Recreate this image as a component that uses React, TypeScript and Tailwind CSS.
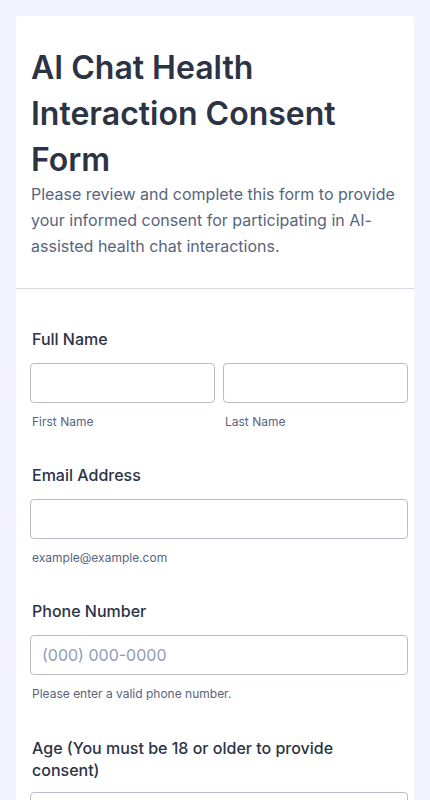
import React from "react";

const font = { fontFamily: "Inter, 'Noto Sans', sans-serif" };

function Label({ children, className = "leading-[24px]" }: { children: React.ReactNode; className?: string }) {
  return (
    <label className={`block pl-[2px] text-[16px] font-medium text-[#2c3345] ${className}`}>{children}</label>
  );
}

function Input({ placeholder }: { placeholder?: string }) {
  return (
    <input
      type="text"
      placeholder={placeholder}
      className="block w-full h-[40px] rounded-[4px] border border-[#b8bdc9] bg-white px-[11px] text-[16px] text-[#2c3345] placeholder:text-[#8f9bb3] outline-none"
      style={font}
    />
  );
}

function Sub({ children }: { children: React.ReactNode }) {
  return <div className="mt-[9px] pl-[2px] text-[12px] leading-[20px] text-[#57647e]">{children}</div>;
}

export default function App() {
  return (
    <div className="min-h-[800px] bg-[#f3f3fe] pt-4" style={font}>
      <div className="mx-4 rounded-t-[4px] bg-white">
        <div className="px-[15px] pt-[29px] pb-[29px] border-b border-[#d8dae9]">
          <h1 className="text-[32px] leading-[46px] font-semibold text-[#2c3345]">
            AI Chat Health Interaction Consent Form
          </h1>
          <p className="mt-[-2px] text-[16px] leading-[26px] text-[#57647e]">
            Please review and complete this form to provide your informed consent for participating in AI-assisted health chat interactions.
          </p>
        </div>
        <div className="pl-[14px] pr-[6px] pt-[38px] pb-10">
          <div>
            <Label>Full Name</Label>
            <div className="mt-3 grid grid-cols-2 gap-2">
              <div>
                <Input />
                <Sub>First Name</Sub>
              </div>
              <div>
                <Input />
                <Sub>Last Name</Sub>
              </div>
            </div>
          </div>
          <div className="mt-[31px]">
            <Label>Email Address</Label>
            <div className="mt-3">
              <Input />
              <Sub>example@example.com</Sub>
            </div>
          </div>
          <div className="mt-[31px]">
            <Label>Phone Number</Label>
            <div className="mt-3">
              <Input placeholder="(000) 000-0000" />
              <Sub>Please enter a valid phone number.</Sub>
            </div>
          </div>
          <div className="mt-[33px]">
            <Label className="max-w-[330px] leading-[22px]">Age (You must be 18 or older to provide consent)</Label>
            <div className="mt-[11px]">
              <Input />
            </div>
          </div>
        </div>
      </div>
    </div>
  );
}
